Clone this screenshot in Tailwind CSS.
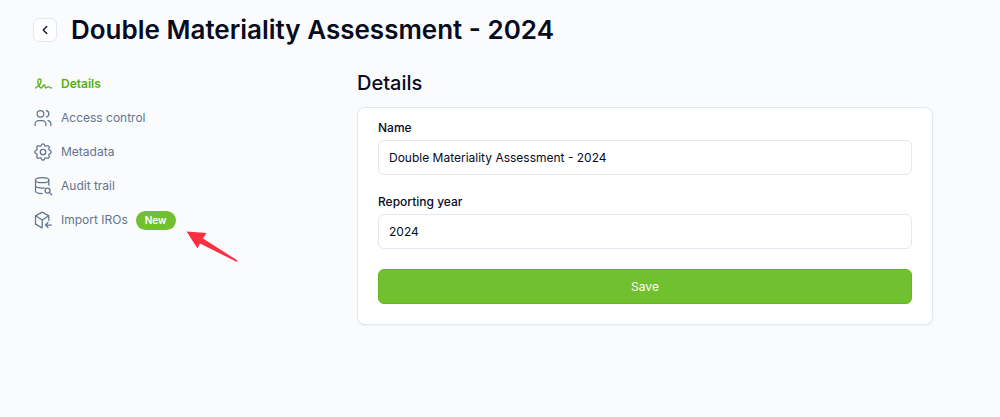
<!DOCTYPE html>
<html lang="en">
  <head>
    <meta charset="UTF-8" />
    <meta name="viewport" content="width=device-width, initial-scale=1.0" />
    <title>Double Materiality Assessment - 2024</title>
    <script src="https://cdn.jsdelivr.net/npm/@tailwindcss/browser@4"></script>
  </head>
  <body class="bg-[#fafbfd] text-[#070b1d] font-[Inter,sans-serif]">
    <div class="min-h-screen pt-3 px-[33px] pb-6">
      <header class="flex items-center gap-3.5">
        <button
          type="button"
          aria-label="Back"
          class="flex size-6 items-center justify-center rounded-md border border-slate-200 bg-white hover:bg-slate-100"
        >
          <svg class="size-3.5" viewBox="0 0 24 24" fill="none" stroke="currentColor" stroke-width="2.2" stroke-linecap="round" stroke-linejoin="round">
            <path d="M15 6l-6 6 6 6" />
          </svg>
        </button>
        <h1 class="text-[26px] leading-9 font-semibold">Double Materiality Assessment - 2024</h1>
      </header>
      <div class="mt-[19px] flex">
        <!-- Side navigation -->
        <nav class="w-[324px] shrink-0 text-[12px] text-slate-500">
          <ul>
            <li>
              <a href="#details" class="flex h-[34px] items-center gap-2 font-semibold text-[#54b00a]">
                <svg class="size-5" viewBox="0 0 20 20" fill="none" stroke="currentColor" stroke-width="1.3" stroke-linecap="round" stroke-linejoin="round">
                  <path d="M2.500 14C6 12 8 9 8 6.500C8 4 4.800 4.300 4.800 7.500C4.800 10.500 6.500 13.800 8 14C9.500 14.200 10 11 11.300 11C12.500 11 11.500 14 13 14C14 14 14.300 12.700 15.500 12.700C16.300 12.700 16.500 14 18.500 14" />
                </svg>
                Details
              </a>
            </li>
            <li>
              <a href="#access" class="flex h-[34px] items-center gap-2">
                <svg class="size-5" viewBox="0 0 24 24" fill="none" stroke="currentColor" stroke-width="1.5" stroke-linecap="round" stroke-linejoin="round">
                  <circle cx="9" cy="7" r="4" />
                  <path d="M2.500 21v-1.500a4.500 4.500 0 0 1 4.500-4.500h4a4.500 4.500 0 0 1 4.500 4.500V21M16 3.130a4 4 0 0 1 0 7.750M21.500 21v-1.500a4.500 4.500 0 0 0-3.500-4.350" />
                </svg>
                Access control
              </a>
            </li>
            <li>
              <a href="#metadata" class="flex h-[34px] items-center gap-2">
                <svg class="size-5" viewBox="1 1 22 22" fill="none" stroke="currentColor" stroke-width="1.4" stroke-linecap="round" stroke-linejoin="round">
                  <path d="M10.325 4.317c.426-1.756 2.924-1.756 3.350 0a1.724 1.724 0 0 0 2.573 1.066c1.543-.94 3.310.826 2.370 2.370a1.724 1.724 0 0 0 1.065 2.572c1.756.426 1.756 2.924 0 3.350a1.724 1.724 0 0 0-1.066 2.573c.94 1.543-.826 3.310-2.370 2.370a1.724 1.724 0 0 0-2.572 1.065c-.426 1.756-2.924 1.756-3.350 0a1.724 1.724 0 0 0-2.573-1.066c-1.543.94-3.310-.826-2.370-2.370a1.724 1.724 0 0 0-1.065-2.572c-1.756-.426-1.756-2.924 0-3.350a1.724 1.724 0 0 0 1.066-2.573c-.94-1.543.826-3.310 2.370-2.370c1 .608 2.296.07 2.572-1.065z" />
                  <circle cx="12" cy="12" r="3" />
                </svg>
                Metadata
              </a>
            </li>
            <li>
              <a href="#audit" class="flex h-[34px] items-center gap-2">
                <svg class="size-5" viewBox="0 0 24 24" fill="none" stroke="currentColor" stroke-width="1.5" stroke-linecap="round" stroke-linejoin="round">
                  <ellipse cx="11" cy="5" rx="8" ry="3" />
                  <path d="M3 5v6.500c0 1.657 3.582 3 8 3c1 0 1.700 0 2.500-.2M19 5v6M3 11.500v6.500c0 1.657 3.582 3 8 3" />
                  <circle cx="17.500" cy="17.500" r="3" />
                  <path d="M19.700 19.700l2.800 2.800" />
                </svg>
                Audit trail
              </a>
            </li>
            <li>
              <a href="#import" class="flex h-[34px] items-center gap-2">
                <svg class="size-5" viewBox="0 0 24 24" fill="none" stroke="currentColor" stroke-width="1.5" stroke-linecap="round" stroke-linejoin="round">
                  <path d="M11 21.500l-8-4.500V7l8-4.500l8 4.500v5.500M11 12l8-5M11 12v9.500M11 12L3 7M22 18h-7M18 15l-3 3l3 3" />
                </svg>
                Import IROs
                <!-- Badge with the pointer that calls it out -->
                <span class="relative rounded-full bg-[#70c030] px-[9px] text-[10px] leading-[19px] font-semibold text-white">
                  New
                  <svg class="absolute top-5 left-[50px] h-8 w-[52px]" viewBox="0 0 52 32" fill="#fb3042">
                    <path d="M0.500 0.500L20.500 2L17 7.500L51.500 29.500Q51.500 31 50 30.500L14 12.500L11.500 17.500Z" />
                  </svg>
                </span>
              </a>
            </li>
          </ul>
        </nav>
        <!-- Details form -->
        <main class="max-w-xl flex-1">
          <h2 class="text-[20px] leading-8 font-medium">Details</h2>
          <form class="mt-2 rounded-lg border border-slate-200 bg-white px-5 pt-3 pb-5 text-[12px] shadow-xs">
            <label for="name" class="block leading-4 font-medium">Name</label>
            <input
              type="text"
              id="name"
              name="name"
              value="Double Materiality Assessment - 2024"
              class="mt-1 block h-[35px] w-full rounded-md border border-slate-200 bg-white px-2.5"
            />
            <label for="year" class="mt-[19px] block leading-4 font-medium">Reporting year</label>
            <input
              type="text"
              id="year"
              name="year"
              value="2024"
              class="mt-1 block h-[35px] w-full rounded-md border border-slate-200 bg-white px-2.5"
            />
            <button
              type="submit"
              class="mt-5 block h-[35px] w-full rounded-md border border-[#62b81e] bg-[#70c030] text-white hover:bg-[#54b00a]"
            >
              Save
            </button>
          </form>
        </main>
      </div>
    </div>
  </body>
</html>
